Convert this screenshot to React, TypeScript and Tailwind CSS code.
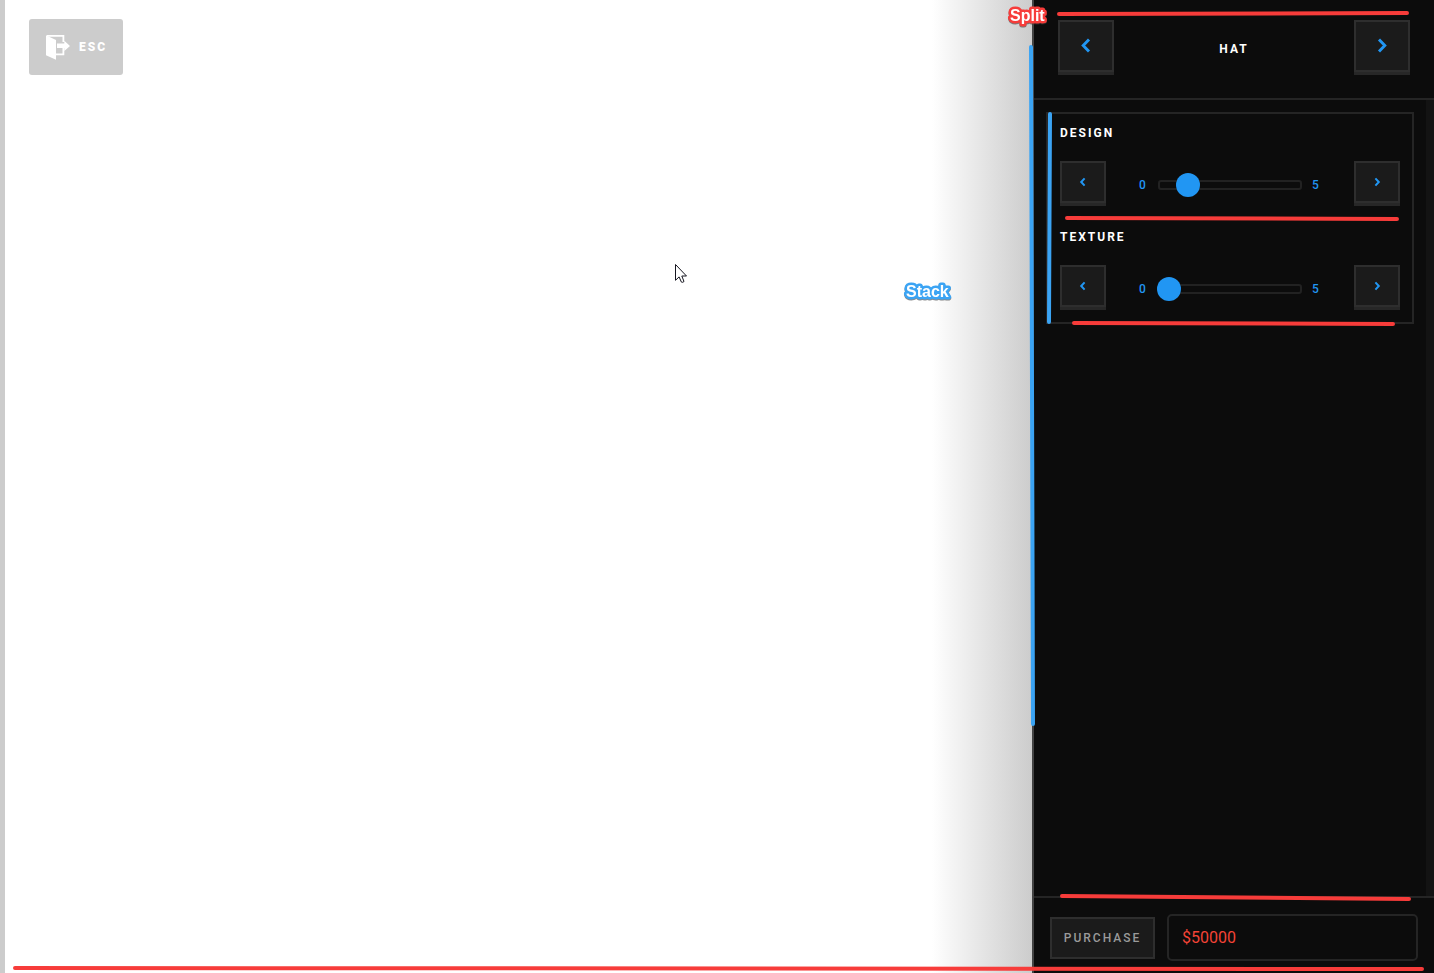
import { useState } from 'react';

const SIZES = {
  large: {
    button: 'h-[52px] w-14 shadow-[0_3px_0_#272727]',
    left: 'M11 1.6 5.2 7.6 11 13.6',
    right: 'M5 1.6 10.8 7.6 5 13.6',
    stroke: 2.9,
  },
  small: {
    button: 'h-[42px] w-[46px] shadow-[0_3px_0_#272727] mb-[6px]',
    left: 'M9.6 4.4 6.2 8l3.4 3.6',
    right: 'M6.4 4.4 9.8 8l-3.4 3.6',
    stroke: 2,
  },
};

type ArrowProps = {
  direction: 'left' | 'right';
  size: 'large' | 'small';
  label: string;
  onClick?: () => void;
};

function ArrowButton({ direction, size, label, onClick }: ArrowProps) {
  const s = SIZES[size];
  return (
    <button
      type="button"
      aria-label={label}
      onClick={onClick}
      className={`flex shrink-0 items-center justify-center border-2 border-[#2e2e2e] bg-[#1b1b1b] text-[#2196f3] ${s.button}`}
    >
      <svg viewBox="0 0 16 16" className="h-4 w-4 overflow-visible" fill="none" stroke="currentColor" strokeWidth={s.stroke}>
        <path d={direction === 'left' ? s.left : s.right} />
      </svg>
    </button>
  );
}

function SliderSection({ label, id, initial }: { label: string; id: string; initial: number }) {
  const [value, setValue] = useState(initial);
  const min = -1;
  const max = 5;
  return (
    <section className="px-3 pt-[10px] pb-[9px]">
      <label htmlFor={id} className="mb-[19px] block text-[12px] leading-[18px] font-bold tracking-[2px] text-white">
        {label}
      </label>
      <div className="flex items-center">
        <ArrowButton direction="left" size="small" label={`Previous ${label}`} onClick={() => setValue(Math.max(min, value - 1))} />
        <div className="flex flex-1 items-center justify-center gap-[10px] text-[12px] leading-[18px] font-medium tracking-[2px] text-[#2196f3]">
          <span className="w-[9px]">0</span>
          <input
            id={id}
            type="range"
            min={min}
            max={max}
            value={value}
            onChange={(e) => setValue(Number(e.target.value))}
            className="h-6 w-36 cursor-pointer appearance-none bg-transparent [&::-webkit-slider-runnable-track]:h-[10px] [&::-webkit-slider-runnable-track]:rounded-[3px] [&::-webkit-slider-runnable-track]:border-2 [&::-webkit-slider-runnable-track]:border-[#222222] [&::-webkit-slider-thumb]:mt-[-9px] [&::-webkit-slider-thumb]:mr-[-3px] [&::-webkit-slider-thumb]:ml-[-3px] [&::-webkit-slider-thumb]:h-6 [&::-webkit-slider-thumb]:w-6 [&::-webkit-slider-thumb]:appearance-none [&::-webkit-slider-thumb]:rounded-full [&::-webkit-slider-thumb]:bg-[#2196f3]"
          />
          <span className="w-[9px]">5</span>
        </div>
        <ArrowButton direction="right" size="small" label={`Next ${label}`} onClick={() => setValue(Math.min(max, value + 1))} />
      </div>
    </section>
  );
}

function ExitIcon() {
  return (
    <svg viewBox="0 0 24 25" className="h-[25px] w-6" aria-hidden="true">
      <path d="M1 .9h16.4v6M17.4 13v6.4H10" fill="none" stroke="#fff" strokeWidth="1.8" />
      <path d="M0 0.3 10 5V24.8L0 20.3z" fill="#fff" />
      <path d="M11 8.6h7.3V5.8L24 11l-5.7 5V13H11z" fill="#fff" />
    </svg>
  );
}

function Cursor() {
  return (
    <svg viewBox="0 0 12 20" className="pointer-events-none absolute top-[264px] left-[670px] h-5 w-3" aria-hidden="true">
      <path
        d="M.5.5v15.8l3.6-3.4 2.3 5.2q1.3.7 2.6-.6L6.8 12h4.7z"
        fill="#fff"
        stroke="#15151f"
        strokeWidth="1"
      />
    </svg>
  );
}

function Tag({ text, color, place }: { text: string; color: string; place: string }) {
  return (
    <svg
      className={`pointer-events-none absolute h-6 w-14 overflow-visible drop-shadow-[0_1px_0_rgba(60,60,60,0.6)] ${place}`}
    >
      <text
        x="4"
        y="17"
        fill="#fff"
        stroke={color}
        strokeWidth="5"
        strokeLinejoin="round"
        className="font-[Liberation_Sans,Arial,sans-serif] text-[16px] font-bold [paint-order:stroke_fill]"
      >
        {text}
      </text>
    </svg>
  );
}

export default function App() {
  return (
    <div className="relative flex h-screen overflow-hidden border-l-[5px] border-[#cccccc] bg-white font-[Roboto,sans-serif]">
      <main className="relative flex min-w-0 flex-1 items-start justify-between">
        <button
          type="button"
          className="mt-[19px] ml-6 flex h-14 w-[94px] items-center gap-[9px] rounded-[3px] bg-[#cccccc] pl-[17px] text-[12px] leading-[18px] font-black tracking-[2px] text-white"
        >
          <ExitIcon />
          ESC
        </button>
        <div className="h-full w-[100px] bg-linear-to-r from-white to-[#cccccc]" />
        <Cursor />
      </main>

      <aside className="relative flex w-[402px] shrink-0 flex-col border-l-2 border-[#444444] bg-[#0c0c0c]">
        <header className="flex items-start justify-between border-b-2 border-[#252525] px-6 pt-5 pb-[26px]">
          <ArrowButton direction="left" size="large" label="Previous category" />
          <h1 className="mt-5 text-[12px] leading-[18px] font-bold tracking-[2px] text-white">HAT</h1>
          <ArrowButton direction="right" size="large" label="Next category" />
        </header>

        <div className="flex min-h-0 flex-1">
          <div className="flex-1 p-3">
            <div className="border-2 border-[#252525]">
              <SliderSection label="DESIGN" id="design" initial={0} />
              <SliderSection label="TEXTURE" id="texture" initial={-1} />
            </div>
          </div>
          <div className="w-2 bg-[#131313]" />
        </div>

        <footer className="relative flex items-center gap-3 border-t-2 border-[#252525] px-4 pt-4 pb-3">
          <button
            type="button"
            className="h-[42px] w-[105px] shrink-0 border-2 border-[#2e2e2e] bg-[#1b1b1b] text-[12px] leading-[18px] font-medium tracking-[2px] text-[#9a9a9a]"
          >
            PURCHASE
          </button>
          <input
            aria-label="Price"
            readOnly
            defaultValue="$50000"
            className="h-[47px] min-w-0 flex-1 rounded-[5px] border-2 border-[#252525] bg-transparent px-[13px] text-[16px] leading-6 text-[#f44336] outline-none"
          />
          <svg className="pointer-events-none absolute top-[-2px] left-0 h-1 w-[398px] overflow-visible" fill="none" stroke="#f73c3a" strokeWidth="4" strokeLinecap="round" aria-hidden="true">
            <path d="M28 0 375 3" />
          </svg>
        </footer>

        <svg className="pointer-events-none absolute top-0 left-[-2px] h-[730px] w-[402px] overflow-visible" fill="none" strokeWidth="4" strokeLinecap="round" aria-hidden="true">
          <g stroke="#f73c3a">
            <path d="M27 14 375 13" />
            <path d="M35 218 365 219" />
            <path d="M42 323 361 324" />
          </g>
          <g stroke="#3ba4f4">
            <path d="M-1 47 1 724" />
            <path d="M18 114 17 322" />
          </g>
        </svg>
        <Tag text="Split" color="#f73c3a" place="top-1 left-[-28px]" />
        <Tag text="Stack" color="#3ba4f4" place="top-[280px] left-[-132px]" />
      </aside>

      <svg
        viewBox="0 0 1411 5"
        preserveAspectRatio="none"
        className="pointer-events-none absolute right-[10px] bottom-[2px] left-2 h-[5px] w-[calc(100%-18px)]"
        fill="none"
        stroke="#f73c3a"
        strokeWidth="4"
        strokeLinecap="round"
        aria-hidden="true"
      >
        <path d="M2 2 1409 3" />
      </svg>
    </div>
  );
}
